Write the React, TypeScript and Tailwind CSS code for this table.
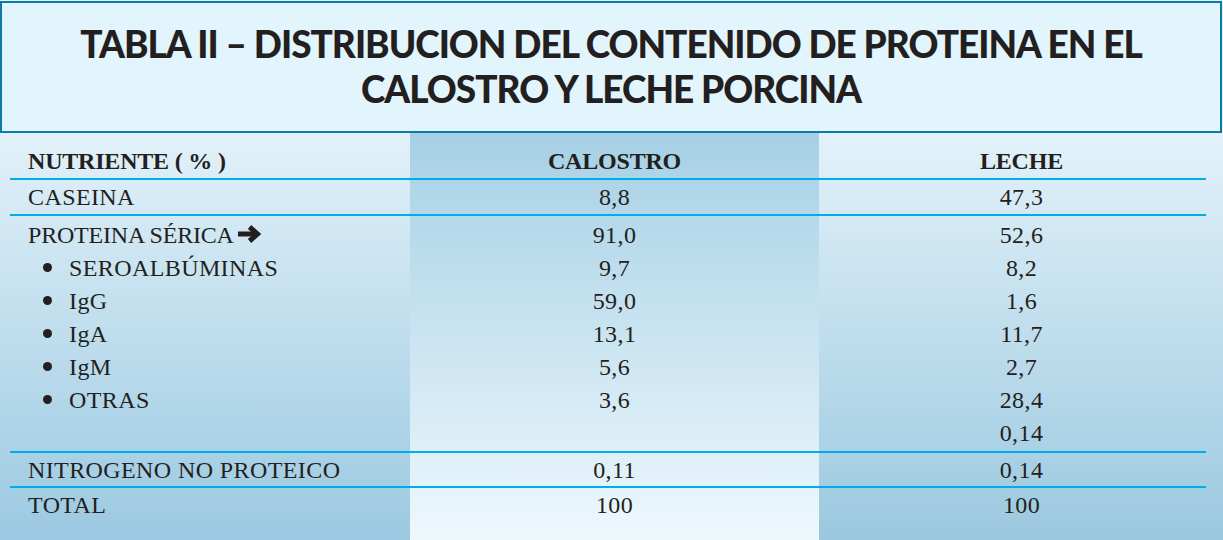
import React from "react";

const serif = { fontFamily: '"Liberation Serif", "Times New Roman", serif' };

const leftRows = ["PROTEINA SÉRICA", "SEROALBÚMINAS", "IgG", "IgA", "IgM", "OTRAS", ""];
const calRows = ["91,0", "9,7", "59,0", "13,1", "5,6", "3,6", ""];
const lecRows = ["52,6", "8,2", "1,6", "11,7", "2,7", "28,4", "0,14"];

function Arrow() {
  return (
    <svg width="26" height="18" viewBox="0 0 26 18" className="inline-block ml-[3px] -mt-[2px]">
      <path d="M1 9 H19" stroke="#231f20" strokeWidth="5" strokeLinecap="butt" fill="none" />
      <path d="M12.5 2 L20.5 9 L12.5 16" stroke="#231f20" strokeWidth="5" strokeLinejoin="miter" fill="none" />
    </svg>
  );
}

function Bullet() {
  return <span className="inline-block w-[9px] h-[9px] rounded-full bg-[#231f20] ml-[15px] mr-[17px]" />;
}

export default function App() {
  return (
    <div className="w-[1223px] h-[540px] overflow-hidden bg-[#e2f3fb] text-[#231f20]" style={serif}>
      <div className="mt-px w-[1222px] h-[132px] border-2 border-[#0b7aa7] bg-[#e2f4fc] flex flex-col items-center justify-center pb-[2px]">
        <div
          className="text-[37px] leading-[45px] font-black text-center tracking-[-1px] text-[#231f20]"
          style={{ fontFamily: 'Lato, "Open Sans", sans-serif' }}
        >
          <div>TABLA II – DISTRIBUCION DEL CONTENIDO DE PROTEINA EN EL</div>
          <div>CALOSTRO Y LECHE PORCINA</div>
        </div>
      </div>
      <div className="flex h-[407px]">
        {/* Left column */}
        <div className="w-[410px] pl-[10px] pt-px bg-[linear-gradient(to_bottom,#e2f1f9,#9bc9e1)] text-[24px] tracking-[0.4px]">
          <div className="h-[46px] border-b-2 border-[#00adec] pl-[18px] pt-[10px] flex items-center leading-none">
            <span className="font-bold text-[24px] tracking-[-0.2px]">NUTRIENTE ( % )</span>
          </div>
          <div className="h-[36px] border-b-2 border-[#00adec] pl-[18px] flex items-center leading-none">CASEINA</div>
          <div className="h-[237px] border-b-2 border-[#00adec] pl-[18px] pt-[2px]">
            {leftRows.map((r, i) => (
              <div key={i} className="h-[33px] flex items-center leading-none">
                {i === 0 ? (
                  <span className="flex items-center tracking-[-0.2px]">
                    {r}
                    <Arrow />
                  </span>
                ) : r ? (
                  <span className="flex items-center">
                    <Bullet />
                    {r}
                  </span>
                ) : null}
              </div>
            ))}
          </div>
          <div className="h-[35px] border-b-2 border-[#00adec] pl-[18px] flex items-center leading-none">NITROGENO NO PROTEICO</div>
          <div className="h-[33px] pl-[18px] flex items-center leading-none">TOTAL</div>
        </div>
        {/* Middle column */}
        <div className="w-[409px] pt-px bg-[linear-gradient(to_bottom,#a6d0e5,#eef8fd)] text-[24px] tracking-[0.4px] text-center">
          <div className="h-[46px] border-b-2 border-[#00adec] pt-[10px] flex items-center justify-center leading-none">
            <span className="font-bold text-[24px] tracking-[-0.2px]">CALOSTRO</span>
          </div>
          <div className="h-[36px] border-b-2 border-[#00adec] flex items-center justify-center leading-none">8,8</div>
          <div className="h-[237px] border-b-2 border-[#00adec] pt-[2px]">
            {calRows.map((r, i) => (
              <div key={i} className="h-[33px] flex items-center justify-center leading-none">{r}</div>
            ))}
          </div>
          <div className="h-[35px] border-b-2 border-[#00adec] flex items-center justify-center leading-none">0,11</div>
          <div className="h-[33px] flex items-center justify-center leading-none">100</div>
        </div>
        {/* Right column */}
        <div className="flex-1 pr-[17px] pt-px bg-[linear-gradient(to_bottom,#e3f2fa,#9bc8df)] text-[24px] tracking-[0.4px] text-center">
          <div className="h-[46px] border-b-2 border-[#00adec] pl-[18px] pt-[10px] flex items-center justify-center leading-none">
            <span className="font-bold text-[24px] tracking-[-0.2px]">LECHE</span>
          </div>
          <div className="h-[36px] border-b-2 border-[#00adec] pl-[18px] flex items-center justify-center leading-none">47,3</div>
          <div className="h-[237px] border-b-2 border-[#00adec] pl-[18px] pt-[2px]">
            {lecRows.map((r, i) => (
              <div key={i} className="h-[33px] flex items-center justify-center leading-none">{r}</div>
            ))}
          </div>
          <div className="h-[35px] border-b-2 border-[#00adec] pl-[18px] flex items-center justify-center leading-none">0,14</div>
          <div className="h-[33px] pl-[18px] flex items-center justify-center leading-none">100</div>
        </div>
      </div>
    </div>
  );
}
